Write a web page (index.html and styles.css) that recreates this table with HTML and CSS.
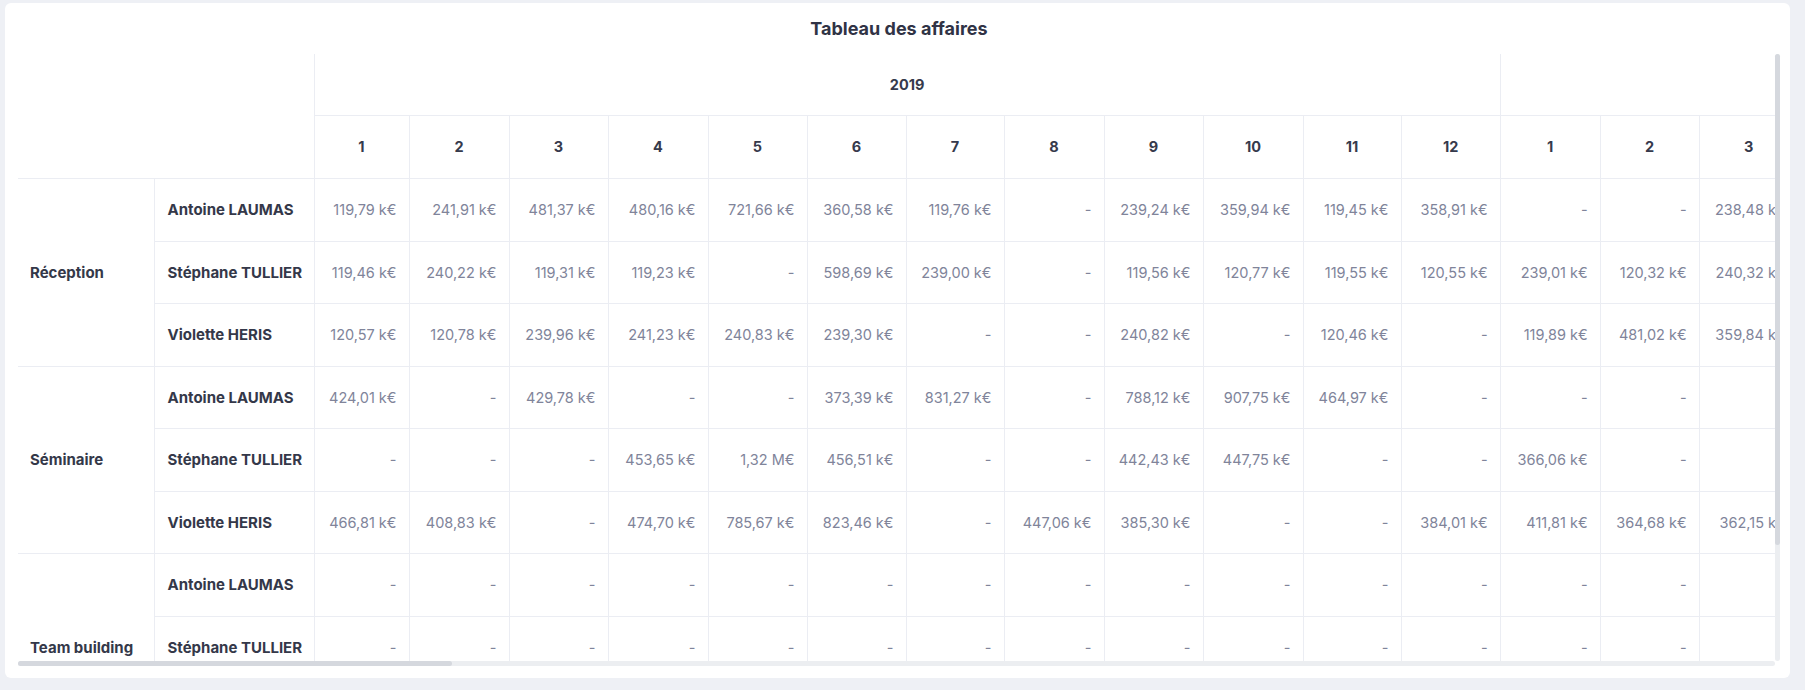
FILE: index.html
```html
<!DOCTYPE html>
<html lang="fr">
<head>
<meta charset="utf-8">
<title>Tableau des affaires</title>
<link rel="stylesheet" href="styles.css">
</head>
<body>
<div class="card">
  <div class="card-head">
    <h3 class="card-title">Tableau des affaires</h3>
  </div>
  <div class="scroller">
    <div class="viewport">
      <table class="pivot" id="pivot"></table>
    </div>
    <div class="vbar"><div class="vthumb"></div></div>
    <div class="hbar"><div class="hthumb"></div></div>
    <div class="corner"></div>
  </div>
</div>
<script src="app.js"></script>
</body>
</html>
```

FILE: styles.css
```css
* { box-sizing: border-box; }

html, body {
  margin: 0;
  padding: 0;
}

body {
  background: #eef0f5;
  font-family: Inter, "Open Sans", sans-serif;
  color: #3f4254;
  padding: 3px 15px 0 5px;
}

.card {
  background: #ffffff;
  border-radius: 6px;
  width: 1785px;
  height: 675px;
  padding: 0 10px 12px 13px;
  display: flex;
  flex-direction: column;
}

.card-head {
  height: 51px;
  display: flex;
  align-items: center;
  justify-content: center;
  padding-bottom: 1px;
}

.card-title {
  margin: 0;
  font-size: 18px;
  font-weight: 700;
  color: #303345;
}

.scroller {
  flex: 1;
  display: grid;
  grid-template-columns: 1fr 5px;
  grid-template-rows: 1fr 5px;
  min-height: 0;
}

.viewport {
  overflow: hidden;
  min-width: 0;
  min-height: 0;
}

.vbar {
  background: #eceef1;
  border-radius: 3px;
  display: flex;
  flex-direction: column;
}

.vthumb {
  height: 491px;
  background: #d5d8de;
  border-radius: 3px;
}

.hbar {
  background: #eceef1;
  border-radius: 3px;
  display: flex;
}

.hthumb {
  width: 434px;
  background: #d5d8de;
  border-radius: 3px;
}

.corner { background: #ffffff; }

.pivot {
  border-collapse: collapse;
  table-layout: fixed;
  font-size: 14.5px;
}

.pivot th,
.pivot td {
  border-right: 1px solid #ebedf3;
  border-bottom: 1px solid #ebedf3;
  padding: 0;
  vertical-align: middle;
  white-space: nowrap;
  overflow: hidden;
}

.pivot th {
  font-weight: 700;
  color: #363a4c;
  text-align: center;
  padding-bottom: 1px;
}

.pivot .row-years { height: 61.5px; }
.pivot .row-months { height: 63px; }
.pivot tbody tr { height: 62.5px; }

.pivot .cat {
  text-align: left;
  padding-left: 12px;
  font-size: 15px;
  font-weight: 700;
  color: #343849;
}

.pivot .name {
  text-align: left;
  padding-left: 13px;
  font-size: 15px;
  font-weight: 700;
  color: #343849;
}

.pivot .val {
  text-align: right;
  padding-right: 12px;
  color: #80849a;
  font-weight: 400;
}
```

FILE: app.js
```js
(function () {
  var D = "-";
  var YEARS = [2019, 2020];
  var MONTH_WIDTHS = [95, 100, 99, 100, 99, 99, 98, 100, 99, 100, 98, 99, 100, 99, 99];
  var DEFAULT_W = 99;
  var CAT_W = 136;
  var NAME_W = 160;

  var groups = [
    { label: "Réception", rows: [
      ["Antoine LAUMAS", ["119,79 k€", "241,91 k€", "481,37 k€", "480,16 k€", "721,66 k€", "360,58 k€", "119,76 k€", D, "239,24 k€", "359,94 k€", "119,45 k€", "358,91 k€", D, D, "238,48 k€"]],
      ["Stéphane TULLIER", ["119,46 k€", "240,22 k€", "119,31 k€", "119,23 k€", D, "598,69 k€", "239,00 k€", D, "119,56 k€", "120,77 k€", "119,55 k€", "120,55 k€", "239,01 k€", "120,32 k€", "240,32 k€"]],
      ["Violette HERIS", ["120,57 k€", "120,78 k€", "239,96 k€", "241,23 k€", "240,83 k€", "239,30 k€", D, D, "240,82 k€", D, "120,46 k€", D, "119,89 k€", "481,02 k€", "359,84 k€"]]
    ]},
    { label: "Séminaire", rows: [
      ["Antoine LAUMAS", ["424,01 k€", D, "429,78 k€", D, D, "373,39 k€", "831,27 k€", D, "788,12 k€", "907,75 k€", "464,97 k€", D, D, D, D]],
      ["Stéphane TULLIER", [D, D, D, "453,65 k€", "1,32 M€", "456,51 k€", D, D, "442,43 k€", "447,75 k€", D, D, "366,06 k€", D, D]],
      ["Violette HERIS", ["466,81 k€", "408,83 k€", D, "474,70 k€", "785,67 k€", "823,46 k€", D, "447,06 k€", "385,30 k€", D, D, "384,01 k€", "411,81 k€", "364,68 k€", "362,15 k€"]]
    ]},
    { label: "Team building", rows: [
      ["Antoine LAUMAS", []],
      ["Stéphane TULLIER", []],
      ["Violette HERIS", []]
    ]}
  ];

  var nMonths = YEARS.length * 12;
  var table = document.getElementById("pivot");

  function el(tag, cls, text) {
    var e = document.createElement(tag);
    if (cls) e.className = cls;
    if (text !== undefined) e.textContent = text;
    return e;
  }

  var colgroup = el("colgroup");
  var total = CAT_W + NAME_W;
  function addCol(w) {
    var c = el("col");
    c.style.width = w + "px";
    colgroup.appendChild(c);
  }
  addCol(CAT_W);
  addCol(NAME_W);
  for (var i = 0; i < nMonths; i++) {
    var w = i < MONTH_WIDTHS.length ? MONTH_WIDTHS[i] : DEFAULT_W;
    addCol(w);
    total += w;
  }
  table.style.width = total + "px";
  table.appendChild(colgroup);

  var thead = el("thead");
  var r1 = el("tr", "row-years");
  var corner = el("th", "corner-cell");
  corner.colSpan = 2;
  corner.rowSpan = 2;
  r1.appendChild(corner);
  YEARS.forEach(function (y) {
    var th = el("th", "year", String(y));
    th.colSpan = 12;
    r1.appendChild(th);
  });
  var r2 = el("tr", "row-months");
  YEARS.forEach(function () {
    for (var m = 1; m <= 12; m++) r2.appendChild(el("th", "month", String(m)));
  });
  thead.appendChild(r1);
  thead.appendChild(r2);
  table.appendChild(thead);

  var tbody = el("tbody");
  groups.forEach(function (g) {
    g.rows.forEach(function (row, idx) {
      var tr = el("tr");
      if (idx === 0) {
        var cat = el("td", "cat", g.label);
        cat.rowSpan = g.rows.length;
        tr.appendChild(cat);
      }
      tr.appendChild(el("td", "name", row[0]));
      for (var k = 0; k < nMonths; k++) {
        var v = row[1][k] !== undefined ? row[1][k] : D;
        tr.appendChild(el("td", "val", v));
      }
      tbody.appendChild(tr);
    });
  });
  table.appendChild(tbody);
})();
```
